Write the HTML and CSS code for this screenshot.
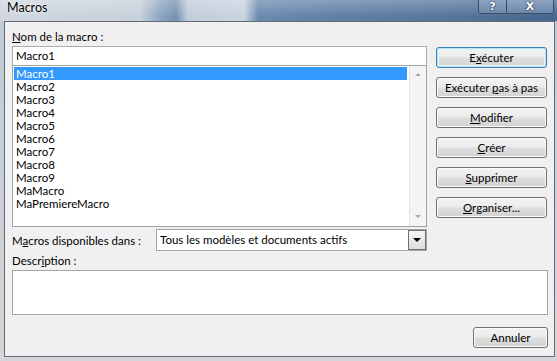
FILE: index.html
```html
<!DOCTYPE html>
<html lang="fr">
<head>
  <meta charset="UTF-8">
  <meta name="viewport" content="width=device-width, initial-scale=1.0">
  <title>Macros</title>
  <link rel="stylesheet" href="styles.css">
</head>
<body>
  <div class="window">
    <div class="titlebar">
      <span class="title">Macros</span>
      <div class="caption">
        <span class="cap-btn help">?</span>
        <span class="cap-btn close">X</span>
      </div>
    </div>

    <div class="frame">
      <div class="client">
        <div class="lbl name-lbl"><u>N</u>om de la macro :</div>

        <div class="main">
          <div class="left">
            <div class="textbox">Macro1</div>
            <div class="listbox">
              <ul class="items">
                <li class="selected">Macro1</li>
                <li>Macro2</li>
                <li>Macro3</li>
                <li>Macro4</li>
                <li>Macro5</li>
                <li>Macro6</li>
                <li>Macro7</li>
                <li>Macro8</li>
                <li>Macro9</li>
                <li>MaMacro</li>
                <li>MaPremiereMacro</li>
              </ul>
              <div class="scrollbar">
                <span class="arrow up"></span>
                <span class="arrow down"></span>
              </div>
            </div>
          </div>

          <div class="buttons">
            <button class="btn default">E<u>x</u>écuter</button>
            <button class="btn">Exécuter <u>p</u>as à pas</button>
            <button class="btn"><u>M</u>odifier</button>
            <button class="btn"><u>C</u>réer</button>
            <button class="btn"><u>S</u>upprimer</button>
            <button class="btn"><u>O</u>rganiser...</button>
          </div>
        </div>

        <div class="avail">
          <span class="lbl avail-lbl">M<u>a</u>cros disponibles dans :</span>
          <div class="select">
            <span class="select-text">Tous les modèles et documents actifs</span>
            <span class="drop"><span class="tri"></span></span>
          </div>
        </div>

        <div class="lbl desc-lbl">Descr<u>i</u>ption :</div>
        <div class="desc"></div>

        <div class="footer">
          <button class="btn cancel">Annuler</button>
        </div>
      </div>
    </div>
  </div>
</body>
</html>
```

FILE: styles.css
```css
* {
  box-sizing: border-box;
}
body {
  margin: 0;
  width: 557px;
  height: 361px;
  overflow: hidden;
  font-family: Lato, "Noto Sans", sans-serif;
  font-size: 11.5px;
  color: #000;
}
u {
  text-underline-offset: 1px;
}

/* window chrome */
.window {
  height: 361px;
  display: flex;
  flex-direction: column;
  background: linear-gradient(#bfc9d4, #d4d6d9);
}
.titlebar {
  height: 21px;
  flex: none;
  display: flex;
  align-items: flex-start;
  padding-left: 7px;
  background:
    linear-gradient(rgba(255, 255, 255, 0.25), rgba(255, 255, 255, 0) 80%),
    linear-gradient(to right, #cfd6de 0, #c7d0da 140px, #8da5c1 160px, #7591b3 176px, #c2cddb 188px, #c9d3df 244px, #6d8aae 258px, #6080a7 330px, #56759b 450px, #46658d 557px);
}
.title {
  padding-top: 1px;
  line-height: 14px;
  font-size: 12.5px;
  text-shadow: 0 0 6px rgba(255, 255, 255, 0.9), 0 0 2px rgba(255, 255, 255, 0.8);
}
.caption {
  margin-left: auto;
  margin-right: 3px;
  display: flex;
  height: 14px;
  border: 1px solid #3c4d66;
  border-top: none;
  border-radius: 0 0 4px 4px;
  overflow: hidden;
  box-shadow: inset 0 0 0 1px rgba(255, 255, 255, 0.45);
}
.cap-btn {
  display: flex;
  align-items: center;
  justify-content: center;
  height: 13px;
  color: #fff;
  font-family: "DejaVu Sans", sans-serif;
  font-weight: bold;
  font-size: 11px;
  line-height: 13px;
  text-shadow: 0 0 2px #1f2f47, 0 0 1px #1f2f47;
  background: linear-gradient(#8fa6c2, #6d88aa);
}
.help {
  width: 28px;
  border-right: 1px solid #3c4d66;
}
.close {
  width: 46px;
}

.frame {
  flex: 1;
  padding: 0 2px 4px 4px;
}
.client {
  height: 336px;
  border: 1px solid #646a72;
  background: #f0f0f0;
  padding: 7px 6px 0 7px;
}

/* labels */
.lbl {
  line-height: 15px;
  white-space: nowrap;
}
.name-lbl {
  margin-bottom: 2px;
}

.main {
  display: flex;
  gap: 9px;
}
.left {
  width: 415px;
}
.textbox {
  height: 20px;
  border: 1px solid #abadb3;
  border-bottom-color: #c8ccd2;
  background: #fff;
  padding-left: 3px;
  line-height: 18px;
}
.listbox {
  margin-top: -1px;
  height: 162px;
  border: 1px solid #a0a3a8;
  background: #fff;
  display: flex;
}
.items {
  list-style: none;
  margin: 0;
  padding: 1px 2px 0 1px;
  flex: 1;
}
.items li {
  height: 13px;
  line-height: 13px;
  padding-left: 2px;
}
.items li.selected {
  background: #3399ff;
  color: #fff;
}
.scrollbar {
  width: 17px;
  background: #f4f4f4;
  border-left: 1px solid #e4e4e4;
  display: flex;
  flex-direction: column;
  justify-content: space-between;
  align-items: center;
  padding: 7px 0 8px;
}
.arrow {
  width: 0;
  height: 0;
  border-left: 3px solid transparent;
  border-right: 3px solid transparent;
}
.arrow.up {
  border-bottom: 3px solid #a8a8a8;
}
.arrow.down {
  border-top: 3px solid #a8a8a8;
}

/* buttons */
.buttons {
  margin-top: 1px;
  display: flex;
  flex-direction: column;
  gap: 9px;
  width: 111px;
}
.btn {
  height: 21px;
  padding: 0;
  font-family: inherit;
  font-size: 11.5px;
  color: #000;
  border: 1px solid #707070;
  border-radius: 3px;
  background: linear-gradient(#f3f3f3 0%, #ebebeb 48%, #dedede 52%, #d2d2d2 100%);
  box-shadow: inset 0 0 0 1px #fbfbfb;
  line-height: 18px;
}
.btn.default {
  border-color: #3c7fb1;
  box-shadow: inset 0 0 0 1px #b8e3f7, inset 0 0 0 2px #e6f5fc;
}
.footer {
  display: flex;
  justify-content: flex-end;
  margin-top: 12px;
}
.btn.cancel {
  width: 75px;
}

/* available in */
.avail {
  margin-top: 2px;
  display: flex;
  align-items: center;
}
.avail-lbl {
  width: 144px;
}
.select {
  width: 271px;
  height: 22px;
  border: 1px solid #a5a5a5;
  background: #fff;
  display: flex;
  align-items: center;
  padding: 1px;
}
.select-text {
  flex: 1;
  padding-left: 2px;
  line-height: 18px;
}
.drop {
  width: 18px;
  height: 20px;
  border: 1px solid #707070;
  background: linear-gradient(#f6f6f6, #dcdcdc);
  display: flex;
  align-items: center;
  justify-content: center;
  margin: -1px;
}
.tri {
  width: 0;
  height: 0;
  border-left: 4px solid transparent;
  border-right: 4px solid transparent;
  border-top: 4px solid #000;
}

/* description */
.desc-lbl {
  margin-top: 2px;
  margin-bottom: 2px;
}
.desc {
  height: 45px;
  border: 1px solid #a5a5a5;
  background: #fff;
}
```
